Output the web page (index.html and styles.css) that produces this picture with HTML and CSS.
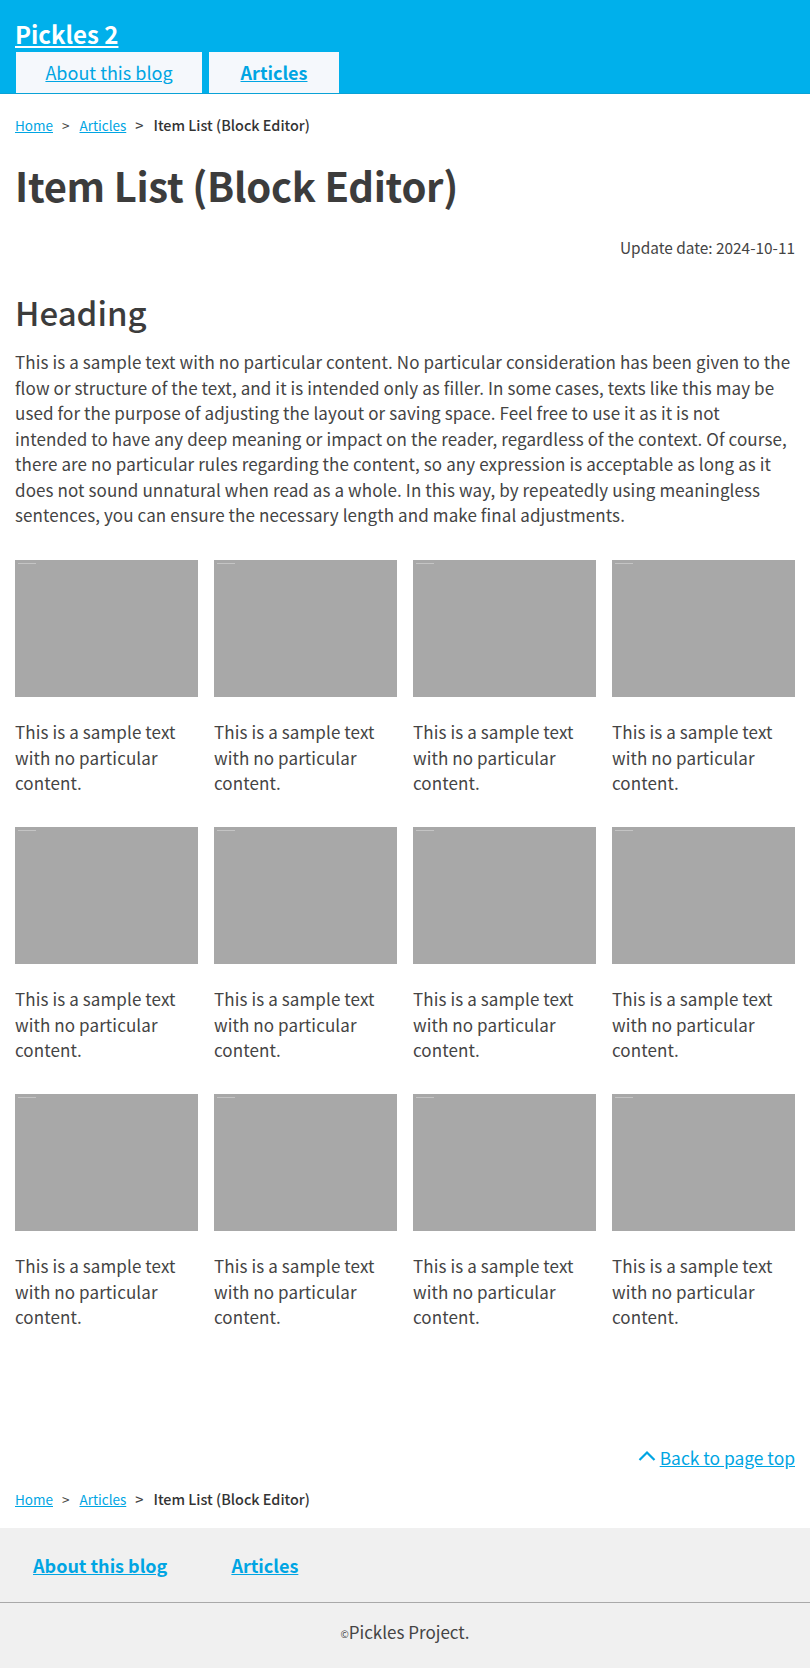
FILE: index.html
```html
<!DOCTYPE html>
<html lang="en">
<head>
<meta charset="utf-8">
<title>Item List (Block Editor) - Pickles 2</title>
<link rel="stylesheet" href="styles.css">
</head>
<body>
<header class="site-header">
  <div class="site-title"><a href="#">Pickles 2</a></div>
  <nav class="global-nav">
    <a class="gnav-item" href="#">About this blog</a>
    <a class="gnav-item is-current" href="#">Articles</a>
  </nav>
</header>

<main class="contents">
  <ul class="breadcrumb">
    <li><a href="#">Home</a></li>
    <li><a href="#">Articles</a></li>
    <li class="current">Item List (Block Editor)</li>
  </ul>

  <h1 class="page-title">Item List (Block Editor)</h1>
  <p class="update-date">Update date: 2024-10-11</p>

  <h2 class="section-heading">Heading</h2>
  <p class="lead">This is a sample text with no particular content. No particular consideration has been given to the flow or structure of the text, and it is intended only as filler. In some cases, texts like this may be used for the purpose of adjusting the layout or saving space. Feel free to use it as it is not intended to have any deep meaning or impact on the reader, regardless of the context. Of course, there are no particular rules regarding the content, so any expression is acceptable as long as it does not sound unnatural when read as a whole. In this way, by repeatedly using meaningless sentences, you can ensure the necessary length and make final adjustments.</p>

  <div class="item-list">
    <div class="item"><div class="thumb"></div><p class="caption">This is a sample text with no particular content.</p></div>
    <div class="item"><div class="thumb"></div><p class="caption">This is a sample text with no particular content.</p></div>
    <div class="item"><div class="thumb"></div><p class="caption">This is a sample text with no particular content.</p></div>
    <div class="item"><div class="thumb"></div><p class="caption">This is a sample text with no particular content.</p></div>
    <div class="item"><div class="thumb"></div><p class="caption">This is a sample text with no particular content.</p></div>
    <div class="item"><div class="thumb"></div><p class="caption">This is a sample text with no particular content.</p></div>
    <div class="item"><div class="thumb"></div><p class="caption">This is a sample text with no particular content.</p></div>
    <div class="item"><div class="thumb"></div><p class="caption">This is a sample text with no particular content.</p></div>
    <div class="item"><div class="thumb"></div><p class="caption">This is a sample text with no particular content.</p></div>
    <div class="item"><div class="thumb"></div><p class="caption">This is a sample text with no particular content.</p></div>
    <div class="item"><div class="thumb"></div><p class="caption">This is a sample text with no particular content.</p></div>
    <div class="item"><div class="thumb"></div><p class="caption">This is a sample text with no particular content.</p></div>
  </div>

  <div class="back-to-top">
    <a href="#"><svg class="chev" width="18" height="11" viewBox="0 0 18 11"><polyline points="1.5,10 9,2.5 16.5,10" fill="none" stroke="#00a5e3" stroke-width="2.2"/></svg><span>Back to page top</span></a>
  </div>

  <ul class="breadcrumb breadcrumb-bottom">
    <li><a href="#">Home</a></li>
    <li><a href="#">Articles</a></li>
    <li class="current">Item List (Block Editor)</li>
  </ul>
</main>

<footer class="site-footer">
  <nav class="footer-nav">
    <a href="#">About this blog</a>
    <a href="#">Articles</a>
  </nav>
  <div class="copyright"><small>©</small>Pickles Project.</div>
</footer>
</body>
</html>
```
FILE: styles.css
```css
* { box-sizing: border-box; }
html, body { margin: 0; padding: 0; }
body {
  font-family: "Noto Sans CJK JP", "Noto Sans", sans-serif;
  color: #444;
  background: #fff;
  font-size: 17px;
  line-height: 1.5;
}
a { color: #00a5e3; }

/* header */
.site-header {
  background: #00b0eb;
  border-bottom: 1px solid #0aa2d6;
  padding: 19px 15px 0;
}
.site-title {
  font-size: 24px;
  font-weight: 700;
  line-height: 30px;
}
.site-title a { color: #fff; }
.global-nav {
  display: flex;
  gap: 7px;
  margin-top: 3px;
  padding-left: 1px;
}
.gnav-item {
  display: flex;
  align-items: center;
  justify-content: center;
  height: 41px;
  background: #f5f8fc;
  font-size: 18px;
  color: #00a5e3;
}
.gnav-item:first-child { width: 186px; }
.gnav-item.is-current { width: 130px; font-weight: 700; }

/* main */
.contents { padding: 21px 15px 0; }
.breadcrumb {
  list-style: none;
  margin: 0;
  padding: 0;
  display: flex;
  font-size: 13.5px;
  line-height: 20px;
}
.breadcrumb li { display: flex; }
.breadcrumb li + li::before {
  content: ">";
  color: #444;
  margin: 0 10px 0 9px;
}
.breadcrumb .current {
  font-size: 14.4px;
  font-weight: 500;
  color: #333;
}

.page-title {
  margin: 25px 0 0;
  font-size: 40px;
  font-weight: 600;
  line-height: 50px;
  letter-spacing: -0.3px;
  color: #3c3c3c;
}
.update-date {
  margin: 26px 0 0;
  text-align: right;
  font-size: 15.4px;
  line-height: 22px;
}
.section-heading {
  margin: 32px 0 0;
  font-size: 33px;
  font-weight: 500;
  line-height: 44px;
  color: #3c3c3c;
}
.lead {
  margin: 15px 0 0;
  font-size: 17px;
  line-height: 25.5px;
  letter-spacing: 0.1px;
}

.item-list {
  display: grid;
  grid-template-columns: repeat(4, 1fr);
  column-gap: 16px;
  row-gap: 31.5px;
  margin-top: 32.5px;
}
.thumb {
  height: 137px;
  background: #a8a8a8;
  position: relative;
}
.thumb::before {
  content: "";
  position: absolute;
  left: 3px;
  top: 3px;
  width: 18px;
  height: 1px;
  background: #c4c4c4;
}
.caption {
  margin: 22px 0 0;
  font-size: 17px;
  line-height: 25.5px;
  letter-spacing: 0.1px;
}

.back-to-top {
  margin-top: 115.5px;
  display: flex;
  justify-content: flex-end;
  font-size: 17.4px;
  line-height: 25.5px;
}
.back-to-top a { display: flex; align-items: center; gap: 4px; }
.chev { display: block; margin-top: -4px; }

.breadcrumb-bottom { margin-top: 18.5px; }

/* footer */
.site-footer {
  margin-top: 19px;
  background: #f0f0f0;
}
.footer-nav {
  display: flex;
  gap: 64px;
  padding: 24px 33px 24px;
  font-size: 18px;
  font-weight: 700;
  line-height: 26px;
  border-bottom: 1px solid #a9a9a9;
}
.copyright {
  text-align: center;
  font-size: 17px;
  line-height: 24px;
  padding: 17px 0 24px;
}
.copyright small { font-size: 10px; vertical-align: 1px; }
```
